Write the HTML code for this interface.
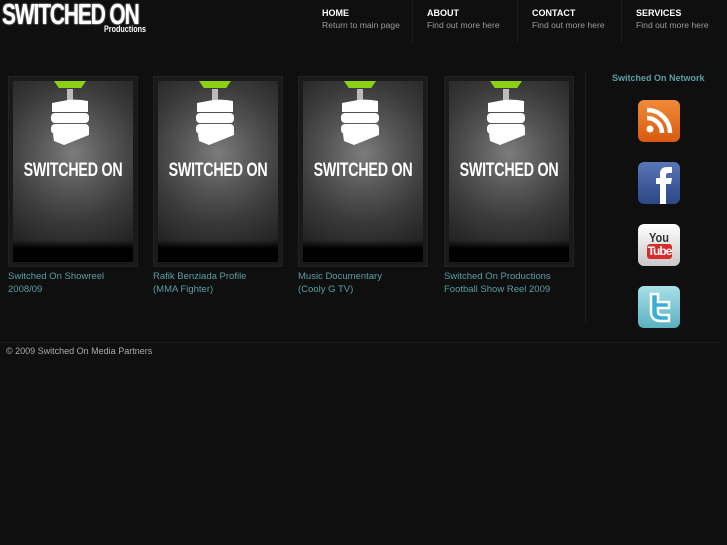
<!DOCTYPE html>
<html><head><style>
*{margin:0;padding:0;box-sizing:border-box}
body{width:727px;height:545px;background:#0f0f0f;font-family:"Liberation Sans",sans-serif;position:relative;overflow:hidden}
.logo{position:absolute;left:2px;top:-1px;color:#fff;font:bold 29px "Liberation Sans",sans-serif;letter-spacing:-1.5px;transform:scaleX(.72);transform-origin:left top;text-shadow:0 0 2px #fff;white-space:nowrap}
.prod{position:absolute;left:104px;top:24px;color:#fff;font:bold 9px "Liberation Sans",sans-serif;transform:scaleX(.8);transform-origin:left top}
.nav{position:absolute;top:0;height:43px;width:105px}
.nav b{position:absolute;left:10px;top:8px;color:#fff;font-size:9px}
.nav span{position:absolute;left:10px;top:20px;color:#9a9a9a;font-size:8.6px;white-space:nowrap}
.sep{position:absolute;top:0;width:1px;height:43px;background:#1c1c1c}
.card{position:absolute;top:76px;width:130px;height:191px;background:#1a1a1a;border:1px solid #222}
.img{position:absolute;left:4px;top:4px;width:120px;height:181px;background:radial-gradient(circle at 50% 40%,#7c7c7c 0,#555 30%,#3a3a3a 55%,#262626 80%,#1a1a1a 95%);overflow:hidden}
.img:after{content:"";position:absolute;left:0;right:0;bottom:0;height:22px;background:linear-gradient(rgba(0,0,0,0),#000 40%)}
.green{position:absolute;left:41px;top:0;width:32px;height:7px;background:#8bd017;clip-path:polygon(0 0,100% 0,85% 100%,15% 100%)}
.bulb{position:absolute;left:37px;top:8px;width:40px;height:56px}
.st{position:absolute;left:-20px;width:160px;top:79px;text-align:center;color:#fff;font:bold 19px "Liberation Sans",sans-serif;letter-spacing:-.3px;white-space:nowrap;transform:scaleX(.75)}
.t{position:absolute;top:270px;color:#5a9ea2;font-size:9.5px;line-height:13px;width:135px;height:25px;overflow:hidden;white-space:nowrap}
.ico{position:absolute;left:638px;width:42px;height:42px;border-radius:6px}
</style></head><body>
<div class="logo">SWITCHED ON</div>
<div class="prod">Productions</div>
<div class="nav" style="left:312px"><b>HOME</b><span>Return to main page</span></div>
<div class="sep" style="left:412px"></div>
<div class="nav" style="left:417px"><b>ABOUT</b><span>Find out more here</span></div>
<div class="sep" style="left:517px"></div>
<div class="nav" style="left:522px"><b>CONTACT</b><span>Find out more here</span></div>
<div class="sep" style="left:621px"></div>
<div class="nav" style="left:626px"><b>SERVICES</b><span>Find out more here</span></div>

<div class="card" style="left:8px"><div class="img"><div class="green"></div><svg class="bulb" viewBox="0 0 40 56"><g fill="#fff"><rect x="17" y="0" width="6" height="12" fill="#bbb"/><path d="M18 11 Q28 10 38 12 L38 23 L2 23 L2 14 Z"/><rect x="1" y="24" width="38" height="10" rx="4"/><rect x="1" y="35" width="38" height="10" rx="4"/><path d="M3 45 L39 40 L39 46 L14 56 L4 52 Z"/></g></svg><div class="st">SWITCHED ON</div></div></div>
<div class="card" style="left:153px"><div class="img"><div class="green"></div><svg class="bulb" viewBox="0 0 40 56"><g fill="#fff"><rect x="17" y="0" width="6" height="12" fill="#bbb"/><path d="M18 11 Q28 10 38 12 L38 23 L2 23 L2 14 Z"/><rect x="1" y="24" width="38" height="10" rx="4"/><rect x="1" y="35" width="38" height="10" rx="4"/><path d="M3 45 L39 40 L39 46 L14 56 L4 52 Z"/></g></svg><div class="st">SWITCHED ON</div></div></div>
<div class="card" style="left:298px"><div class="img"><div class="green"></div><svg class="bulb" viewBox="0 0 40 56"><g fill="#fff"><rect x="17" y="0" width="6" height="12" fill="#bbb"/><path d="M18 11 Q28 10 38 12 L38 23 L2 23 L2 14 Z"/><rect x="1" y="24" width="38" height="10" rx="4"/><rect x="1" y="35" width="38" height="10" rx="4"/><path d="M3 45 L39 40 L39 46 L14 56 L4 52 Z"/></g></svg><div class="st">SWITCHED ON</div></div></div>
<div class="card" style="left:444px"><div class="img"><div class="green"></div><svg class="bulb" viewBox="0 0 40 56"><g fill="#fff"><rect x="17" y="0" width="6" height="12" fill="#bbb"/><path d="M18 11 Q28 10 38 12 L38 23 L2 23 L2 14 Z"/><rect x="1" y="24" width="38" height="10" rx="4"/><rect x="1" y="35" width="38" height="10" rx="4"/><path d="M3 45 L39 40 L39 46 L14 56 L4 52 Z"/></g></svg><div class="st">SWITCHED ON</div></div></div>

<div class="t" style="left:8px">Switched On Showreel<br>2008/09</div>
<div class="t" style="left:153px">Rafik Benziada Profile<br>(MMA Fighter)</div>
<div class="t" style="left:298px">Music Documentary<br>(Cooly G TV)</div>
<div class="t" style="left:444px">Switched On Productions<br>Football Show Reel 2009</div>

<div style="position:absolute;left:585px;top:72px;width:1px;height:252px;background:#1c1c1c"></div>
<div style="position:absolute;left:612px;top:73px;color:#5a9ea2;font-size:9px;font-weight:bold">Switched On Network</div>
<div class="ico" style="top:100px;background:linear-gradient(#f08a3a,#d85a10)"><svg width="42" height="42"><circle cx="12" cy="29" r="3.5" fill="#fff"/><path d="M9 18a15 15 0 0 1 15 15M9 10a23 23 0 0 1 23 23" stroke="#fff" stroke-width="4.5" fill="none"/></svg></div>
<div class="ico" style="top:162px;background:linear-gradient(#5a78b8 0,#3b5998 60%,#2d4886)"><svg width="42" height="42"><path d="M22 42V22h-4v-6h4v-4c0-5 3-7 7-7h5v6h-4c-1 0-2 1-2 2v3h6l-1 6h-5v20z" fill="#fff"/></svg></div>
<div class="ico" style="top:224px;background:linear-gradient(#fff,#c8c8c8)"><div style="position:absolute;left:0;right:0;top:6px;text-align:center;font:bold 13px 'Liberation Sans',sans-serif;color:#333;transform:scaleX(.85)">You</div><div style="position:absolute;left:9px;top:20px;width:25px;height:15px;background:#d92b2b;border-radius:3px;text-align:center;color:#fff;font:bold 12px 'Liberation Sans',sans-serif;line-height:15px;letter-spacing:-1px">Tube</div></div>
<div class="ico" style="top:286px;background:linear-gradient(#a8e0e8,#5ab0c0)"><svg width="42" height="42"><path d="M13 8v18c0 6 4 9 10 9h8v-6h-7c-3 0-4-1-4-3v-4h11v-6H20V8z" fill="#3aaed8" stroke="#fff" stroke-width="2.5"/></svg></div>

<div style="position:absolute;left:0;top:342px;width:720px;height:1px;background:#1c1c1c"></div>
<div style="position:absolute;left:6px;top:346px;color:#aaa;font-size:9px">© 2009 Switched On Media Partners</div>
</body></html>
